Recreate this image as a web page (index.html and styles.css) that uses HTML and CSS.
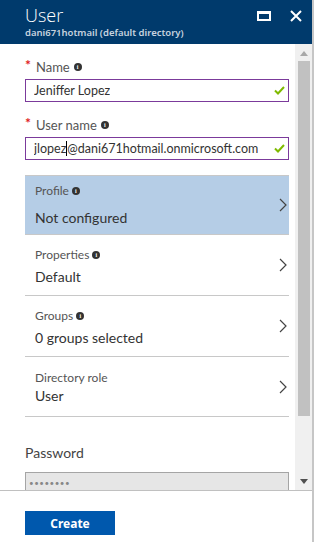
FILE: index.html
```html
<!DOCTYPE html>
<html>
<head>
<meta charset="utf-8">
<link rel="stylesheet" href="styles.css">
</head>
<body>
<div class="blade">
  <div class="main">
    <header class="header">
      <div class="titles">
        <div class="title">User</div>
        <div class="subtitle">dani671hotmail (default directory)</div>
      </div>
      <div class="actions">
        <span class="maximize"></span>
        <svg class="close" width="12" height="12" viewBox="0 0 12 12"><path d="M1 1 L11 11 M11 1 L1 11" stroke="#fff" stroke-width="2" fill="none"/></svg>
      </div>
    </header>
    <div class="body">
      <div class="scroll">
        <div class="content">
          <div class="field">
            <div class="label"><span class="req">*</span>Name<span class="info">i</span></div>
            <div class="input"><span class="val">Jeniffer Lopez</span><svg class="check" width="11" height="9" viewBox="0 0 11 9"><path d="M1 4.5 L4 7.5 L10 1" stroke="#7fba00" stroke-width="2" fill="none"/></svg></div>
          </div>
          <div class="field">
            <div class="label"><span class="req">*</span>User name<span class="info">i</span></div>
            <div class="input"><span class="val">jlopez<span class="caret"></span>@dani671hotmail.onmicrosoft.com</span><svg class="check" width="11" height="9" viewBox="0 0 11 9"><path d="M1 4.5 L4 7.5 L10 1" stroke="#7fba00" stroke-width="2" fill="none"/></svg></div>
          </div>
          <div class="rows">
            <div class="row selected row-profile">
              <div class="row-text">
                <div class="row-label">Profile<span class="info small">i</span></div>
                <div class="row-value">Not configured</div>
              </div>
              <svg class="chev" width="8" height="14" viewBox="0 0 8 14"><path d="M1 1 L7 7 L1 13" stroke="#444" stroke-width="1.2" fill="none"/></svg>
            </div>
            <div class="row">
              <div class="row-text">
                <div class="row-label">Properties<span class="info small">i</span></div>
                <div class="row-value">Default</div>
              </div>
              <svg class="chev" width="8" height="14" viewBox="0 0 8 14"><path d="M1 1 L7 7 L1 13" stroke="#444" stroke-width="1.2" fill="none"/></svg>
            </div>
            <div class="row">
              <div class="row-text">
                <div class="row-label">Groups<span class="info small">i</span></div>
                <div class="row-value">0 groups selected</div>
              </div>
              <svg class="chev" width="8" height="14" viewBox="0 0 8 14"><path d="M1 1 L7 7 L1 13" stroke="#444" stroke-width="1.2" fill="none"/></svg>
            </div>
            <div class="row row-role">
              <div class="row-text">
                <div class="row-label">Directory role</div>
                <div class="row-value">User</div>
              </div>
              <svg class="chev" width="8" height="14" viewBox="0 0 8 14"><path d="M1 1 L7 7 L1 13" stroke="#444" stroke-width="1.2" fill="none"/></svg>
            </div>
          </div>
          <div class="password">
            <div class="pw-label">Password</div>
            <div class="pw-input">••••••••</div>
          </div>
        </div>
        <div class="scrollbar">
          <svg class="arrow" width="8" height="5" viewBox="0 0 8 5"><path d="M0 5 L4 0 L8 5 Z" fill="#a8a8a8"/></svg>
          <div class="thumb"></div>
          <svg class="arrow down" width="8" height="5" viewBox="0 0 8 5"><path d="M0 0 L4 5 L8 0 Z" fill="#505050"/></svg>
        </div>
      </div>
      <footer class="footer">
        <button class="create">Create</button>
      </footer>
    </div>
  </div>
  <div class="edge"></div>
</div>
</body>
</html>
```

FILE: styles.css
```css
* { box-sizing: border-box; }
html, body { margin: 0; padding: 0; }
body {
  width: 316px;
  height: 542px;
  background: #fff;
  font-family: "Lato", "Noto Sans", sans-serif;
  color: #333;
  overflow: hidden;
}
.blade {
  display: flex;
  width: 316px;
  height: 542px;
}
.main {
  width: 312px;
  display: flex;
  flex-direction: column;
}
.edge {
  width: 2px;
  background: #c6c6c6;
}
.header {
  height: 44px;
  background: #003a6c;
  display: flex;
  justify-content: space-between;
  padding-left: 25px;
  width: 314px;
  flex: none;
}
.titles { padding-top: 4px; }
.title {
  color: #fff;
  font-size: 18px;
  font-weight: 300;
  line-height: 22px;
  font-family: "Open Sans", sans-serif;
}
.subtitle {
  color: #c6d2df;
  font-size: 9.5px;
  font-weight: 600;
  line-height: 12px;
  margin-top: 1px;
  font-family: "Noto Sans", sans-serif;
}
.actions {
  display: flex;
  align-items: flex-start;
  gap: 19px;
  padding-top: 10px;
  padding-right: 12px;
}
.maximize {
  display: block;
  width: 14px;
  height: 10px;
  border: 2px solid #fff;
  border-top-width: 3px;
  margin-top: 1px;
}
.close { display: block; }
.body {
  flex: 1;
  display: flex;
  flex-direction: column;
}
.scroll {
  height: 447px;
  flex: none;
  display: flex;
  overflow: hidden;
  border-bottom: 1px solid #c0c0c0;
}
.content {
  flex: 1;
  min-width: 0;
  padding: 15px 6px 0 25px;
}
.field { margin-bottom: 15px; }
.label {
  font-size: 13px;
  line-height: 16px;
  color: #555;
  display: flex;
  align-items: center;
  margin-bottom: 4px;
}
.req {
  color: #e0201b;
  font-size: 14px;
  font-weight: 700;
  margin-right: 5px;
  position: relative;
  top: -2px;
}
.info {
  display: inline-flex;
  align-items: center;
  justify-content: center;
  width: 8px;
  height: 8px;
  border-radius: 50%;
  background: #333;
  color: #fff;
  font-size: 6px;
  font-weight: 700;
  line-height: 1;
  margin-left: 4px;
  font-family: "Liberation Serif", serif;
}
.input {
  height: 23px;
  border: 1px solid #7b3a9b;
  display: flex;
  align-items: center;
  justify-content: space-between;
  padding: 0 3px 0 8px;
  font-size: 12.5px;
  color: #333;
  white-space: nowrap;
}
.val { overflow: hidden; min-width: 0; }
.caret {
  display: inline-block;
  width: 1px;
  height: 15px;
  background: #000;
  vertical-align: middle;
  margin-top: -2px;
}
.check { display: block; flex: none; }
.rows {
  border-top: 1px solid #c8c8c8;
}
.row {
  height: 61px;
  border-bottom: 1px solid #c8c8c8;
  display: flex;
  align-items: center;
  justify-content: space-between;
  padding: 0 2px 0 10px;
}
.row.selected {
  background: #b5cde6;
  height: 59px;
}
.row-text {
  display: flex;
  flex-direction: column;
  gap: 6px;
  margin-top: 4px;
}
.row-profile .row-text { gap: 11px; margin-top: 1px; }
.row-label {
  font-size: 12px;
  line-height: 14px;
  color: #555;
  display: flex;
  align-items: center;
}
.row-role { height: 60px; }
.row-role .row-text { gap: 2px; margin-top: 3px; }
.row-value {
  font-size: 14px;
  line-height: 18px;
  color: #333;
}
.info.small { margin-left: 3px; }
.chev { display: block; }
.password { padding-top: 27px; }
.pw-label {
  font-size: 14px;
  line-height: 18px;
  color: #444;
  margin-bottom: 10px;
}
.pw-input {
  height: 24px;
  background: #e6e6e6;
  border: 1px solid #a5a5a5;
  font-size: 8px;
  color: #888;
  letter-spacing: 0.5px;
  padding: 5px 0 0 3px;
}
.scrollbar {
  width: 17px;
  flex: none;
  background: #f0f0f0;
  display: flex;
  flex-direction: column;
  align-items: center;
  padding: 7px 0 6px;
}
.arrow { display: block; flex: none; }
.thumb {
  width: 12px;
  height: 355px;
  background: #c1c1c1;
  margin: 5px 0 auto;
}
.footer {
  padding: 20px 0 0 25px;
}
.create {
  width: 90px;
  height: 24px;
  border: none;
  background: #0058ad;
  color: #fff;
  font-family: "Noto Sans", sans-serif;
  font-size: 12px;
  font-weight: 700;
  padding: 0;
}
```
